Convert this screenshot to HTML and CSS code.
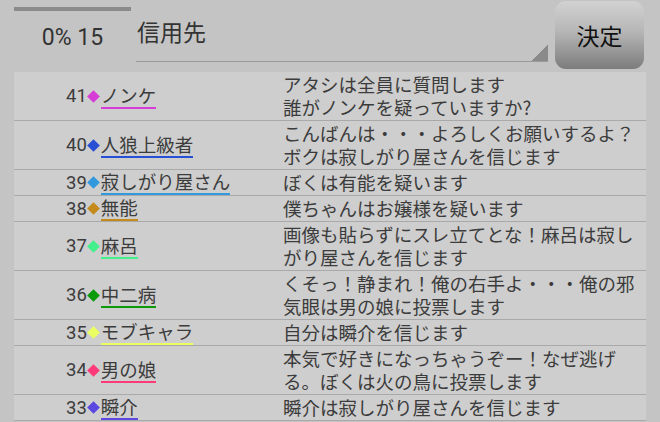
FILE: index.html
```html
<!DOCTYPE html>
<html lang="ja">
<head>
  <meta charset="UTF-8" />
  <meta name="viewport" content="width=device-width, initial-scale=1" />
  <title>投票</title>
  <link rel="stylesheet" href="styles.css">
</head>
<body>
  <header class="top">
    <div class="progress">
      <div class="progress-bar"></div>
      <div class="progress-text">0% 15</div>
    </div>
    <div class="spinner">信用先</div>
    <button class="decide">決定</button>
  </header>

  <div class="log">
    <div class="row">
      <div class="who"><span class="num">41</span><span class="dia c-magenta"></span><span class="name c-magenta">ノンケ</span></div>
      <div class="msg">アタシは全員に質問します<br>誰がノンケを疑っていますか?</div>
    </div>
    <div class="row">
      <div class="who"><span class="num">40</span><span class="dia c-blue"></span><span class="name c-blue">人狼上級者</span></div>
      <div class="msg">こんばんは・・・よろしくお願いするよ？ボクは寂しがり屋さんを信じます</div>
    </div>
    <div class="row">
      <div class="who"><span class="num">39</span><span class="dia c-sky"></span><span class="name c-sky">寂しがり屋さん</span></div>
      <div class="msg">ぼくは有能を疑います</div>
    </div>
    <div class="row">
      <div class="who"><span class="num">38</span><span class="dia c-gold"></span><span class="name c-gold">無能</span></div>
      <div class="msg">僕ちゃんはお嬢様を疑います</div>
    </div>
    <div class="row">
      <div class="who"><span class="num">37</span><span class="dia c-mint"></span><span class="name c-mint">麻呂</span></div>
      <div class="msg">画像も貼らずにスレ立てとな！麻呂は寂しがり屋さんを信じます</div>
    </div>
    <div class="row">
      <div class="who"><span class="num">36</span><span class="dia c-green"></span><span class="name c-green">中二病</span></div>
      <div class="msg">くそっ！静まれ！俺の右手よ・・・俺の邪気眼は男の娘に投票します</div>
    </div>
    <div class="row">
      <div class="who"><span class="num">35</span><span class="dia c-yellow"></span><span class="name c-yellow">モブキャラ</span></div>
      <div class="msg">自分は瞬介を信じます</div>
    </div>
    <div class="row">
      <div class="who"><span class="num">34</span><span class="dia c-pink"></span><span class="name c-pink">男の娘</span></div>
      <div class="msg">本気で好きになっちゃうぞー！なぜ逃げる。ぼくは火の鳥に投票します</div>
    </div>
    <div class="row">
      <div class="who"><span class="num">33</span><span class="dia c-violet"></span><span class="name c-violet">瞬介</span></div>
      <div class="msg">瞬介は寂しがり屋さんを信じます</div>
    </div>
  </div>
</body>
</html>
```

FILE: styles.css
```css
body {
  margin: 0;
  padding: 0 14px;
  background: #c4c4c4;
  color: #3c3c3c;
  font-family: Roboto, "Noto Sans CJK JP", sans-serif;
  overflow: hidden;
}

/* top bar */
.top {
  display: flex;
  height: 72px;
}
.progress {
  width: 117px;
  padding-top: 7px;
  box-sizing: border-box;
}
.progress-bar {
  height: 4px;
  background: #8b8b8b;
}
.progress-text {
  margin-top: 13px;
  font-size: 23px;
  line-height: 27px;
  text-align: center;
  color: #333;
}
.spinner {
  width: 412px;
  height: 62px;
  margin-left: 5px;
  padding: 19px 0 0 1px;
  box-sizing: border-box;
  font-family: "Noto Sans CJK JP", sans-serif;
  font-size: 23px;
  line-height: 25px;
  color: #333;
  border-bottom: 1px solid #9a9a9a;
  background: linear-gradient(to bottom right, transparent 50%, #8a8a8a 50%) no-repeat right bottom / 16px 16px;
}
.decide {
  width: 89px;
  height: 68px;
  margin: 1px 0 0 7px;
  border: none;
  border-radius: 11px;
  background: linear-gradient(#d2d2d2, #b6b6b6 45%, #7c7c7c);
  font-family: "Noto Sans CJK JP", sans-serif;
  font-size: 23px;
  color: #111;
  padding: 0;
}

/* log table */
.log {
  background: #cecece;
}
.row {
  display: grid;
  grid-template-columns: 269px 1fr;
  border-bottom: 1px solid #a9a9a9;
}
.who {
  display: flex;
  align-items: center;
  padding-left: 52px;
  font-size: 18.5px;
}
.num {
  font-family: Roboto, sans-serif;
  line-height: 22px;
}
.dia {
  display: inline-block;
  width: 9px;
  height: 9px;
  margin: 0 2.5px;
  transform: rotate(45deg);
  background: var(--c);
}
.name {
  font-family: "Noto Sans CJK JP", sans-serif;
  line-height: 22px;
  padding-bottom: 1px;
  border-bottom: 2px solid var(--c);
}
.msg {
  padding: 1px 8px 1px 0;
  font-family: "Noto Sans CJK JP", sans-serif;
  font-size: 18.5px;
  line-height: 23px;
}

.c-magenta { --c: #d63cd6; }
.c-blue { --c: #2750d4; }
.c-sky { --c: #3399dd; }
.c-gold { --c: #c48a1c; }
.c-mint { --c: #44f08c; }
.c-green { --c: #0a9a0a; }
.c-yellow { --c: #ecff62; }
.c-pink { --c: #ff3a78; }
.c-violet { --c: #5a48e0; }
```
